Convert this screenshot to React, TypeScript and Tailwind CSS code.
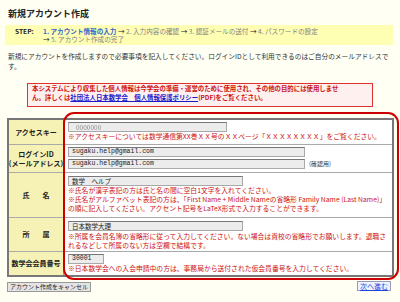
import React from 'react'

const Input = ({ value, className, mono }: { value?: React.ReactNode; className: string; mono?: boolean }) => (
  <div
    className={`h-[10px] bg-[#ececec] border border-[#a8a8a8] border-t-[#777] pl-[3px] text-[6.5px] leading-[8px] text-[#222] whitespace-nowrap overflow-hidden ${
      mono ? "font-['Liberation_Mono',monospace]" : ''
    } ${className}`}
  >
    {value}
  </div>
)

const Note = ({ children }: { children: React.ReactNode }) => (
  <div className="text-[6.8px] leading-[9px] text-[#cc1111] whitespace-nowrap">{children}</div>
)

const Label = ({ children }: { children: React.ReactNode }) => (
  <div className="w-[55px] shrink-0 bg-[#f6f2b6] border-r border-[#999] flex flex-col items-center justify-center text-[7px] leading-[9px] font-bold text-[#222] whitespace-nowrap">
    {children}
  </div>
)

export default function App() {
  return (
    <div className="relative w-[400px] h-[302px] overflow-hidden bg-[#fffff4] text-[#222] font-['Noto_Sans_CJK_JP','Noto_Sans',sans-serif]">
      <h1 className="pt-[9px] pl-[8px] text-[9px] leading-[10px] font-bold">新規アカウント作成</h1>

      <div className="mt-[6px] ml-[5px] w-[388px] h-[20px] bg-[#ffffb4] flex pl-[10px] pt-[1.5px] text-[6.6px] leading-[8.5px]">
        <div className="w-[28px] shrink-0 font-bold">STEP:</div>
        <div className="text-[#808080]">
          <div className="whitespace-nowrap">
            <span className="text-[#3366cc] font-bold">1. アカウント情報の入力</span>
            <span className="text-[#222]"> → </span>2. 入力内容の確認<span className="text-[#222]"> → </span>3. 認証メールの送付
            <span className="text-[#222]"> → </span>4. パスワードの設定
          </div>
          <div className="whitespace-nowrap">
            <span className="text-[#222]">→ </span>5. アカウント作成の完了
          </div>
        </div>
      </div>

      <div className="mt-[6px] pl-[8px] text-[6.7px] leading-[10px] text-[#333]">
        <div className="whitespace-nowrap">
          新規にアカウントを作成しますので必要事項を記入してください。ログインIDとして利用できるのはご自分のメールアドレスで
        </div>
        <div>す。</div>
      </div>

      <div className="mt-[12px] ml-[27px] w-[346px] h-[24px] bg-[#fff0f0] border border-[#e03030] pl-[4px] text-[6.4px] leading-[9px] font-bold text-[#cc1111]">
        <div className="whitespace-nowrap">
          本システムにより収集した個人情報は今学会の準備・運営のために使用され、その他の目的には使用しませ
        </div>
        <div className="whitespace-nowrap">
          ん。詳しくは
          <span className="text-[#1a1acc] underline">社団法人日本数学会　個人情報保護ポリシー</span>
          (PDF)をご覧ください。
        </div>
      </div>

      <div className="mt-[11px] ml-[7px] w-[387px] border-2 border-[#777] bg-white">
        <div className="flex h-[25px] border-b border-[#aaa]">
          <Label>アクセスキー</Label>
          <div className="pl-[4px] pt-[2px]">
            <Input
              value={<span className="inline-block pl-[4px] text-[#8a8a8a] blur-[0.6px]">0000000</span>}
              className="w-[159px]"
            />
            <Note>※アクセスキーについては数学通信第XX巻ＸＸ号のＸＸページ「ＸＸＸＸＸＸＸＸ」をご覧ください。</Note>
          </div>
        </div>
        <div className="flex h-[28px] border-b border-[#aaa]">
          <Label>
            <span>ログインID</span>
            <span>(メールアドレス)</span>
          </Label>
          <div className="pl-[4px] pt-[2px] flex flex-col gap-[2px]">
            <Input value="sugaku.help@gmail.com" className="w-[237px]" mono />
            <div className="flex items-center gap-[4px]">
              <Input value="sugaku.help@gmail.com" className="w-[237px]" mono />
              <span className="text-[6px] leading-[8px] text-[#333]">(確認用)</span>
            </div>
          </div>
        </div>
        <div className="flex h-[45px] border-b border-[#aaa]">
          <Label>
            <span className="tracking-[13px] pl-[13px]">氏名</span>
          </Label>
          <div className="pl-[4px] pt-[3px]">
            <Input value="数学　ヘルプ" className="w-[175px]" />
            <Note>※氏名が漢字表記の方は氏と名の間に空白1文字を入れてください。</Note>
            <Note>
              ※氏名がアルファベット表記の方は、「First Name + Middle Nameの省略形 Family Name (Last Name)」
            </Note>
            <Note>の順に記入してください。アクセント記号をLaTeX形式で入力することができます。</Note>
          </div>
        </div>
        <div className="flex h-[34px] border-b border-[#aaa]">
          <Label>
            <span className="tracking-[13px] pl-[13px]">所属</span>
          </Label>
          <div className="pl-[4px] pt-[3px]">
            <Input value="日本数学大理" className="w-[175px]" />
            <div className="mt-[1px]">
              <Note>
                ※所属を会員名簿の省略形に従って入力してください。ない場合は貴校の省略形でお願いします。退職さ
              </Note>
              <Note>れるなどして所属のない方は空欄で結構です。</Note>
            </div>
          </div>
        </div>
        <div className="flex h-[23px]">
          <Label>数学会会員番号</Label>
          <div className="pl-[4px] pt-[2px]">
            <Input value="30001" className="w-[36px]" mono />
            <Note>※日本数学会への入会申請中の方は、事務局から送付された仮会員番号を入力してください。</Note>
          </div>
        </div>
      </div>

      <div className="mt-[5px] ml-[7px] w-[384px] flex justify-between items-start">
        <button className="h-[10px] px-[2px] bg-[#e4e4e4] border border-[#999] text-[6px] leading-[8px] text-[#222] whitespace-nowrap">
          アカウント作成をキャンセル
        </button>
        <button className="-mt-[1px] h-[10px] px-[2px] bg-[#eef4ff] border border-[#99b] text-[7px] leading-[8px] text-[#2244dd] underline whitespace-nowrap">
          次へ進む
        </button>
      </div>

      <div className="absolute left-[63px] top-[112px] w-[336px] h-[168px] border-2 border-[#cc0000] rounded-[11px] pointer-events-none" />
    </div>
  )
}
